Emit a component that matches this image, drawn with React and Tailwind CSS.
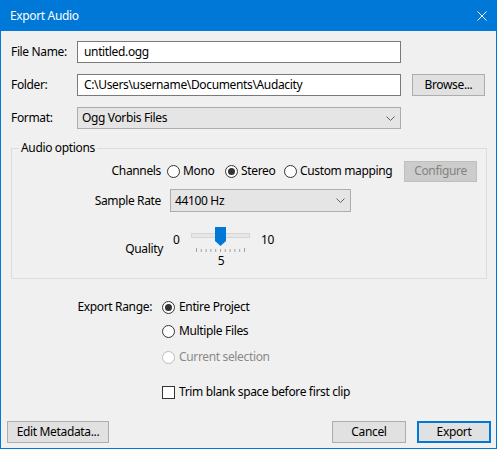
import React from "react";

const font = { fontFamily: '"Noto Sans", "Liberation Sans", sans-serif' };

function Chevron() {
  return (
    <svg width="9" height="5" viewBox="0 0 9 5" className="shrink-0">
      <path d="M0.5 0.5 L4.5 4.5 L8.5 0.5" fill="none" stroke="#606060" strokeWidth="1" />
    </svg>
  );
}

function Radio({ checked, disabled }) {
  const c = disabled ? "#bcbcbc" : "#333333";
  return (
    <svg width="13" height="13" viewBox="0 0 13 13" className="shrink-0">
      <circle cx="6.5" cy="6.5" r="6" fill="#ffffff" stroke={c} strokeWidth="1" />
      {checked && <circle cx="6.5" cy="6.5" r="3.5" fill="#333333" />}
    </svg>
  );
}

function Btn({ children, className = "" }) {
  return (
    <div
      className={
        "flex h-[22px] items-center justify-center border border-[#adadad] bg-[#e1e1e1] text-[12px] text-black " +
        className
      }
    >
      {children}
    </div>
  );
}

export default function App() {
  return (
    <div
      style={font}
      className="flex h-[449px] w-[497px] flex-col border-x border-b border-[#0078d7] bg-[#f0f0f0] text-[12px] leading-[16px] tracking-[-0.35px] text-black"
    >
      {/* title bar */}
      <div className="-mx-px flex h-[31px] shrink-0 items-center justify-between bg-[#0078d7] pl-[10px] pr-[10px] text-white">
        <span className="text-[12px]">Export Audio</span>
        <svg width="10" height="10" viewBox="0 0 10 10">
          <path d="M0.5 0.5 L9.5 9.5 M9.5 0.5 L0.5 9.5" stroke="#ffffff" strokeWidth="1" />
        </svg>
      </div>

      {/* File name */}
      <div className="mt-[10px] flex h-[22px] items-center">
        <div className="w-[76px] pl-[10px]">File Name:</div>
        <div className="flex h-[22px] w-[324px] items-center border border-[#7a7a7a] bg-white pl-[6px]">
          untitled.ogg
        </div>
      </div>

      {/* Folder */}
      <div className="mt-[11px] flex h-[22px] items-center">
        <div className="w-[76px] pl-[10px]">Folder:</div>
        <div className="flex h-[22px] w-[324px] items-center border border-[#7a7a7a] bg-white pl-[6px]">
          C:\Users\username\Documents\Audacity
        </div>
        <Btn className="ml-[11px] w-[73px]">Browse...</Btn>
      </div>

      {/* Format */}
      <div className="mt-[11px] flex h-[22px] items-center">
        <div className="w-[76px] pl-[10px]">Format:</div>
        <div className="flex h-[22px] w-[324px] items-center justify-between border border-[#adadad] bg-[#e5e5e5] pl-[4px] pr-[5px]">
          <span>Ogg Vorbis Files</span>
          <Chevron />
        </div>
      </div>

      {/* Audio options group */}
      <fieldset className="ml-[10px] mt-[11px] w-[476px] border border-[#dcdcdc] px-0 pb-[13px] pt-0">
        <legend className="ml-[7px] px-[2px] leading-[16px]">Audio options</legend>

        {/* Channels */}
        <div className="mt-[4px] flex h-[22px] items-center">
          <div className="w-[149px] text-right">Channels</div>
          <div className="ml-[6px] flex w-[58px] items-center gap-[3px]">
            <Radio />
            <span>Mono</span>
          </div>
          <div className="flex w-[59px] items-center gap-[3px]">
            <Radio checked />
            <span>Stereo</span>
          </div>
          <div className="flex w-[120px] items-center gap-[3px]">
            <Radio />
            <span>Custom mapping</span>
          </div>
          <div className="flex h-[21px] w-[73px] items-center justify-center border border-[#bfbfbf] bg-[#cccccc] text-[#838383]">
            Configure
          </div>
        </div>

        {/* Sample rate */}
        <div className="mt-[7px] flex h-[23px] items-center">
          <div className="w-[149px] text-right">Sample Rate</div>
          <div className="ml-[9px] flex h-[23px] w-[181px] items-center justify-between border border-[#adadad] bg-[#e5e5e5] pl-[4px] pr-[5px]">
            <span>44100 Hz</span>
            <Chevron />
          </div>
        </div>

        {/* Quality */}
        <div className="mt-[13px] flex h-[40px] items-start">
          <div className="w-[151px] pt-[16px] text-right">Quality</div>
          <div className="ml-[10px] w-[18px] pt-[7px]">0</div>
          <div className="flex w-[60px] flex-col items-center">
            <svg width="60" height="29" viewBox="0 0 60 29">
              <rect x="0.5" y="8.5" width="58" height="4" fill="#e7e7e7" stroke="#d6d6d6" />
              <path d="M24 2 H35 V16 L29.5 21 L24 16 Z" fill="#0078d7" />
              {[0, 1, 2, 3, 4, 5, 6, 7, 8, 9, 10].map((i) => (
                <line
                  key={i}
                  x1={5.5 + i * 4.8}
                  x2={5.5 + i * 4.8}
                  y1={i === 0 || i === 10 ? 23 : 24}
                  y2="27"
                  stroke="#a0a0a0"
                  strokeWidth="1"
                />
              ))}
            </svg>
            <div className="-mt-[1px]">5</div>
          </div>
          <div className="ml-[10px] pt-[7px]">10</div>
        </div>
      </fieldset>

      {/* Export range */}
      <div className="mt-[20px] flex h-[16px] items-center">
        <div className="w-[151px] text-right">Export Range:</div>
        <div className="ml-[10px] flex items-center gap-[4px]">
          <Radio checked />
          <span>Entire Project</span>
        </div>
      </div>
      <div className="ml-[161px] mt-[8px] flex h-[16px] items-center gap-[4px]">
        <Radio />
        <span>Multiple Files</span>
      </div>
      <div className="ml-[161px] mt-[10px] flex h-[16px] items-center gap-[4px] text-[#8a8a8a]">
        <Radio disabled />
        <span>Current selection</span>
      </div>
      <div className="ml-[161px] mt-[19px] flex h-[16px] items-center gap-[4px]">
        <div className="h-[13px] w-[13px] shrink-0 border border-[#333333] bg-white" />
        <span>Trim blank space before first clip</span>
      </div>

      {/* Buttons */}
      <div className="mb-[5px] mt-auto flex items-center pl-[6px] pr-[5px]">
        <Btn className="w-[102px]">Edit Metadata...</Btn>
        <div className="flex-1" />
        <Btn className="w-[74px]">Cancel</Btn>
        <div className="ml-[11px] flex h-[22px] w-[74px] items-center justify-center border-2 border-[#0078d7] bg-[#e1e1e1]">
          Export
        </div>
      </div>
    </div>
  );
}
